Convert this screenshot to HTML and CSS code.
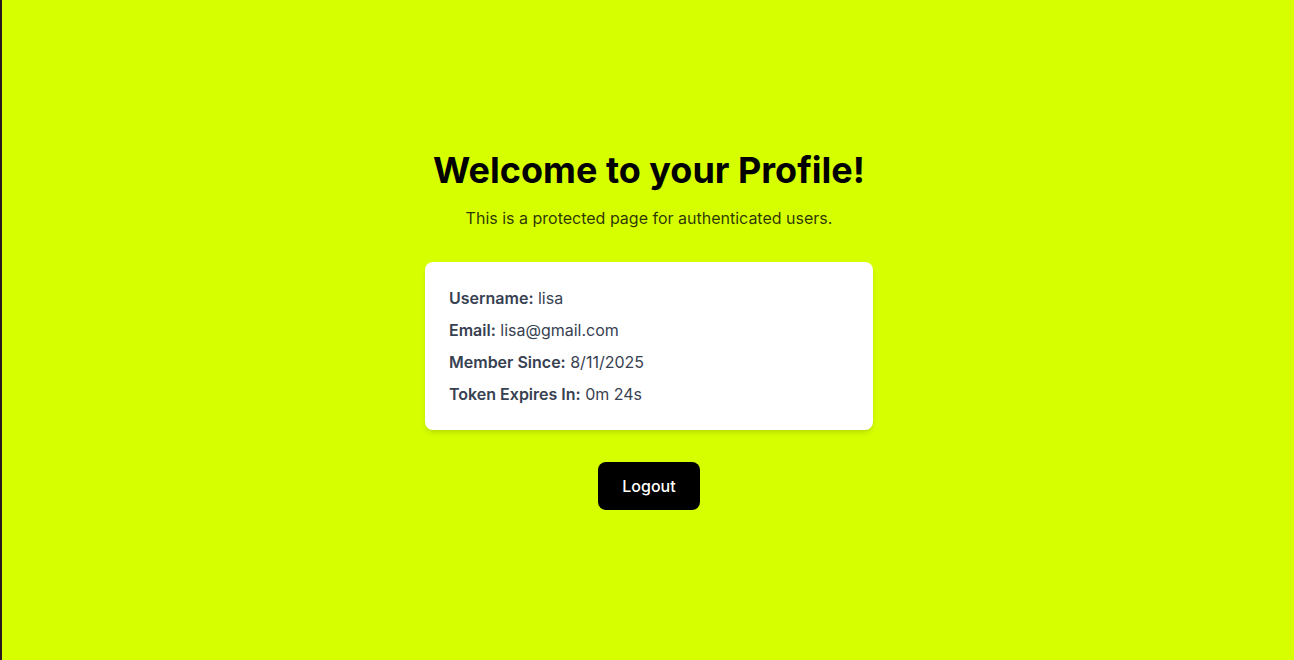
FILE: index.html
```html
<!DOCTYPE html>
<html lang="en">
<head>
<meta charset="utf-8">
<title>Profile</title>
<link rel="stylesheet" href="styles.css">
</head>
<body>
<main class="page">
  <section class="profile">
    <h1 class="title">Welcome to your Profile!</h1>
    <p class="subtitle">This is a protected page for authenticated users.</p>
    <div class="card">
      <p class="row"><strong>Username:</strong> lisa</p>
      <p class="row"><strong>Email:</strong> lisa@gmail.com</p>
      <p class="row"><strong>Member Since:</strong> 8/11/2025</p>
      <p class="row"><strong>Token Expires In:</strong> 0m 24s</p>
    </div>
    <button class="logout" type="button">Logout</button>
  </section>
</main>
</body>
</html>
```

FILE: styles.css
```css
* { box-sizing: border-box; }
html, body { margin: 0; padding: 0; }
body {
  font-family: Inter, "Noto Sans", sans-serif;
  background: #d6ff00;
}
.page {
  min-height: 660px;
  border-left: 2px solid #2b1a1c;
  padding-left: 2px;
  display: flex;
  align-items: center;
  justify-content: center;
}
.profile {
  display: flex;
  flex-direction: column;
  align-items: center;
  text-align: center;
}
.title {
  margin: 0 0 16px;
  font-size: 36px;
  line-height: 40px;
  font-weight: 700;
  color: #000;
}
.subtitle {
  margin: 0 0 32px;
  font-size: 16px;
  line-height: 24px;
  color: rgba(0, 0, 0, 0.8);
}
.card {
  width: 448px;
  background: #fff;
  border-radius: 8px;
  padding: 24px;
  display: flex;
  flex-direction: column;
  gap: 8px;
  text-align: left;
  box-shadow: 0 4px 6px -1px rgba(0,0,0,0.1), 0 2px 4px -2px rgba(0,0,0,0.1);
}
.row {
  margin: 0;
  font-size: 16px;
  line-height: 24px;
  color: #374151;
}
.row strong { font-weight: 600; }
.logout {
  margin-top: 32px;
  height: 48px;
  padding: 12px 24px;
  border: 0;
  border-radius: 8px;
  background: #000;
  color: #fff;
  font-family: inherit;
  font-size: 16px;
  line-height: 24px;
  font-weight: 500;
  cursor: pointer;
}
```
